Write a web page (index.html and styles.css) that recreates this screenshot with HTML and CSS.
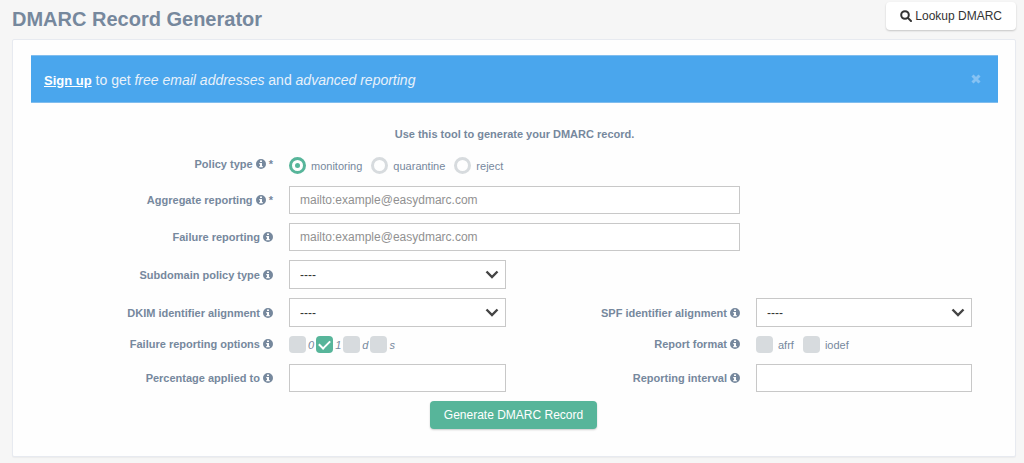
FILE: index.html
```html
<!DOCTYPE html>
<html lang="en">
<head>
<meta charset="utf-8">
<title>DMARC Record Generator</title>
<link rel="stylesheet" href="styles.css">
</head>
<body>
<svg class="defs" aria-hidden="true">
  <symbol id="info" viewBox="0 0 20 20">
    <path fill-rule="evenodd" d="M10 0a10 10 0 1 0 0 20a10 10 0 0 0 0-20zM8 3h4v3.200H8zM6.500 7.800H12V14h1.500v2.500h-7V14H8v-3.700H6.500z"/>
  </symbol>
</svg>
<header class="page-head">
  <h1 class="title">DMARC Record Generator</h1>
  <a class="lookup" href="#"><svg class="lookup-icon" viewBox="0 0 12 12" aria-hidden="true"><circle cx="5" cy="5" r="3.800"/><path d="M7.900 7.900L11 11"/></svg>Lookup DMARC</a>
</header>
<main class="card">
  <div class="alert">
    <p class="alert-text"><a class="signup" href="#">Sign up</a> to get <i>free email addresses</i> and <i>advanced reporting</i></p>
    <button class="close" type="button" aria-label="Close"><svg class="close-icon" viewBox="0 0 10 10" aria-hidden="true"><path d="M1.500 1.500L8.500 8.500M8.500 1.500L1.500 8.500"/></svg></button>
  </div>
  <p class="intro">Use this tool to generate your DMARC record.</p>
  <form class="form">
    <span class="label low" id="policy">Policy type <svg class="info"><use href="#info"/></svg> *</span>
    <div class="options wide radios" role="radiogroup" aria-labelledby="policy">
      <label class="option"><input class="radio" type="radio" name="policy" checked>monitoring</label>
      <label class="option"><input class="radio" type="radio" name="policy">quarantine</label>
      <label class="option"><input class="radio" type="radio" name="policy">reject</label>
    </div>

    <label class="label start" for="aggregate">Aggregate reporting <svg class="info"><use href="#info"/></svg> *</label>
    <input class="field wide" id="aggregate" type="text" placeholder="mailto:example@easydmarc.com">

    <label class="label start" for="failure">Failure reporting <svg class="info"><use href="#info"/></svg></label>
    <input class="field wide" id="failure" type="text" placeholder="mailto:example@easydmarc.com">

    <label class="label start" for="subdomain">Subdomain policy type <svg class="info"><use href="#info"/></svg></label>
    <select class="field select" id="subdomain"><option>----</option></select>

    <label class="label start" for="dkim">DKIM identifier alignment <svg class="info"><use href="#info"/></svg></label>
    <select class="field select" id="dkim"><option>----</option></select>
    <label class="label" for="spf">SPF identifier alignment <svg class="info"><use href="#info"/></svg></label>
    <select class="field select" id="spf"><option>----</option></select>

    <span class="label start low" id="fo">Failure reporting options <svg class="info"><use href="#info"/></svg></span>
    <div class="options compact" role="group" aria-labelledby="fo">
      <label class="option"><input class="check" type="checkbox"><i>0</i></label>
      <label class="option"><input class="check" type="checkbox" checked><i>1</i></label>
      <label class="option"><input class="check" type="checkbox"><i>d</i></label>
      <label class="option"><input class="check" type="checkbox"><i>s</i></label>
    </div>
    <span class="label low" id="format">Report format <svg class="info"><use href="#info"/></svg></span>
    <div class="options" role="group" aria-labelledby="format">
      <label class="option"><input class="check" type="checkbox">afrf</label>
      <label class="option"><input class="check" type="checkbox">iodef</label>
    </div>

    <label class="label start" for="percent">Percentage applied to <svg class="info"><use href="#info"/></svg></label>
    <input class="field" id="percent" type="text">
    <label class="label" for="interval">Reporting interval <svg class="info"><use href="#info"/></svg></label>
    <input class="field" id="interval" type="text">

    <button class="submit" type="button">Generate DMARC Record</button>
  </form>
</main>
</body>
</html>
```
FILE: styles.css
```css
* {
  box-sizing: border-box;
}

body {
  margin: 0;
  padding: 2px 8px 6px 12px;
  background: #f6f6f6;
  color: #76889d;
  font-family: "Liberation Sans", Arial, sans-serif;
  font-size: 11px;
  line-height: 16px;
}

.defs {
  position: absolute;
  width: 0;
  height: 0;
}

.page-head {
  display: flex;
  justify-content: space-between;
  align-items: flex-start;
  height: 37px;
}

.title {
  margin: 0;
  padding-top: 5px;
  font-size: 20px;
  line-height: 24px;
}

.lookup {
  display: flex;
  align-items: center;
  gap: 3px;
  padding: 6px 14px;
  border-radius: 4px;
  background: #fff;
  box-shadow: 0 1px 2px rgba(0, 0, 0, .2);
  color: #333;
  font-size: 12px;
  text-decoration: none;
}

.lookup-icon {
  width: 12px;
  height: 12px;
  fill: none;
  stroke: #333;
  stroke-width: 2;
  stroke-linecap: round;
}

.card {
  padding: 15px 17px 27px 18px;
  border: 1px solid #e7eaf0;
  border-radius: 2px;
  background: #fefefe;
  box-shadow: 0 1px 1px rgba(0, 0, 0, .04);
}

.alert {
  display: flex;
  justify-content: space-between;
  align-items: center;
  height: 48px;
  padding: 0 17px 0 13px;
  border: solid #80bdee;
  border-width: 1px 0;
  background: #4aa6ed;
  color: #e8f1fa;
  font-size: 14px;
}

.alert-text {
  margin: 0;
  padding-top: 2px;
}

.signup {
  color: #fff;
  font-size: 13px;
  font-weight: bold;
}

.close {
  display: flex;
  padding: 0;
  border: 0;
  background: none;
}

.close-icon {
  width: 10px;
  height: 10px;
  stroke: #86c2f3;
  stroke-width: 3;
}

.intro {
  margin: 23px 0 14px;
  font-weight: bold;
  text-align: center;
}

.form {
  display: grid;
  grid-template-columns: 242fr 217fr 218fr 216fr;
  gap: 9px 16px;
  align-items: center;
  padding-right: 26px;
}

.label {
  font-weight: bold;
  text-align: right;
}

.start {
  grid-column: 1;
}

.wide {
  grid-column: 2 / 4;
}

.low {
  align-self: start;
}

.info {
  width: 10px;
  height: 10px;
  fill: #76889d;
  vertical-align: -1px;
}

.options {
  display: flex;
  align-items: center;
  gap: 9px;
  height: 19px;
  padding-bottom: 2px;
}

.radios {
  height: 21px;
}

.option {
  display: flex;
  align-items: center;
  gap: 5px;
}

.compact {
  gap: 2px;
}

.compact .option {
  gap: 2px;
}

.radio,
.check {
  appearance: none;
  display: grid;
  place-items: center;
  width: 17px;
  height: 17px;
  margin: 0;
}

.radio {
  border: 3px solid #d7dbde;
  border-radius: 50%;
}

.radio:checked {
  border-color: #57b59a;
}

.radio:checked::before {
  content: "";
  width: 5px;
  height: 5px;
  border-radius: 50%;
  background: #57b59a;
}

.check {
  border-radius: 4px;
  background: #d7dbde;
}

.check:checked {
  background: #57b59a;
}

.check:checked::before {
  content: "";
  width: 9px;
  height: 5px;
  margin-bottom: 2px;
  border: solid #fff;
  border-width: 0 0 2px 2px;
  transform: rotate(-45deg);
}

.field {
  width: 100%;
  height: 28px;
  padding: 0 10px;
  border: 1px solid #c8c8c8;
  border-radius: 0;
  background: #fff;
  color: #333;
  font: 12px "Liberation Sans", Arial, sans-serif;
}

.field::placeholder {
  color: #919191;
}

.select {
  appearance: none;
  height: 29px;
  background: #fff url("data:image/svg+xml,%3Csvg xmlns='http://www.w3.org/2000/svg' viewBox='0 0 14 9'%3E%3Cpath d='M1.500 1.500L7 7L12.500 1.500' fill='none' stroke='%23444' stroke-width='2.400'/%3E%3C/svg%3E") no-repeat right 6px center / 14px 9px;
}

.submit {
  grid-column: 1 / -1;
  justify-self: center;
  height: 28px;
  margin-left: 24px;
  padding: 0 14px;
  border: 0;
  border-radius: 4px;
  background: #57b59a;
  box-shadow: 0 1px 2px rgba(0, 0, 0, .2);
  color: #fff;
  font: 12px "Liberation Sans", Arial, sans-serif;
}
```
